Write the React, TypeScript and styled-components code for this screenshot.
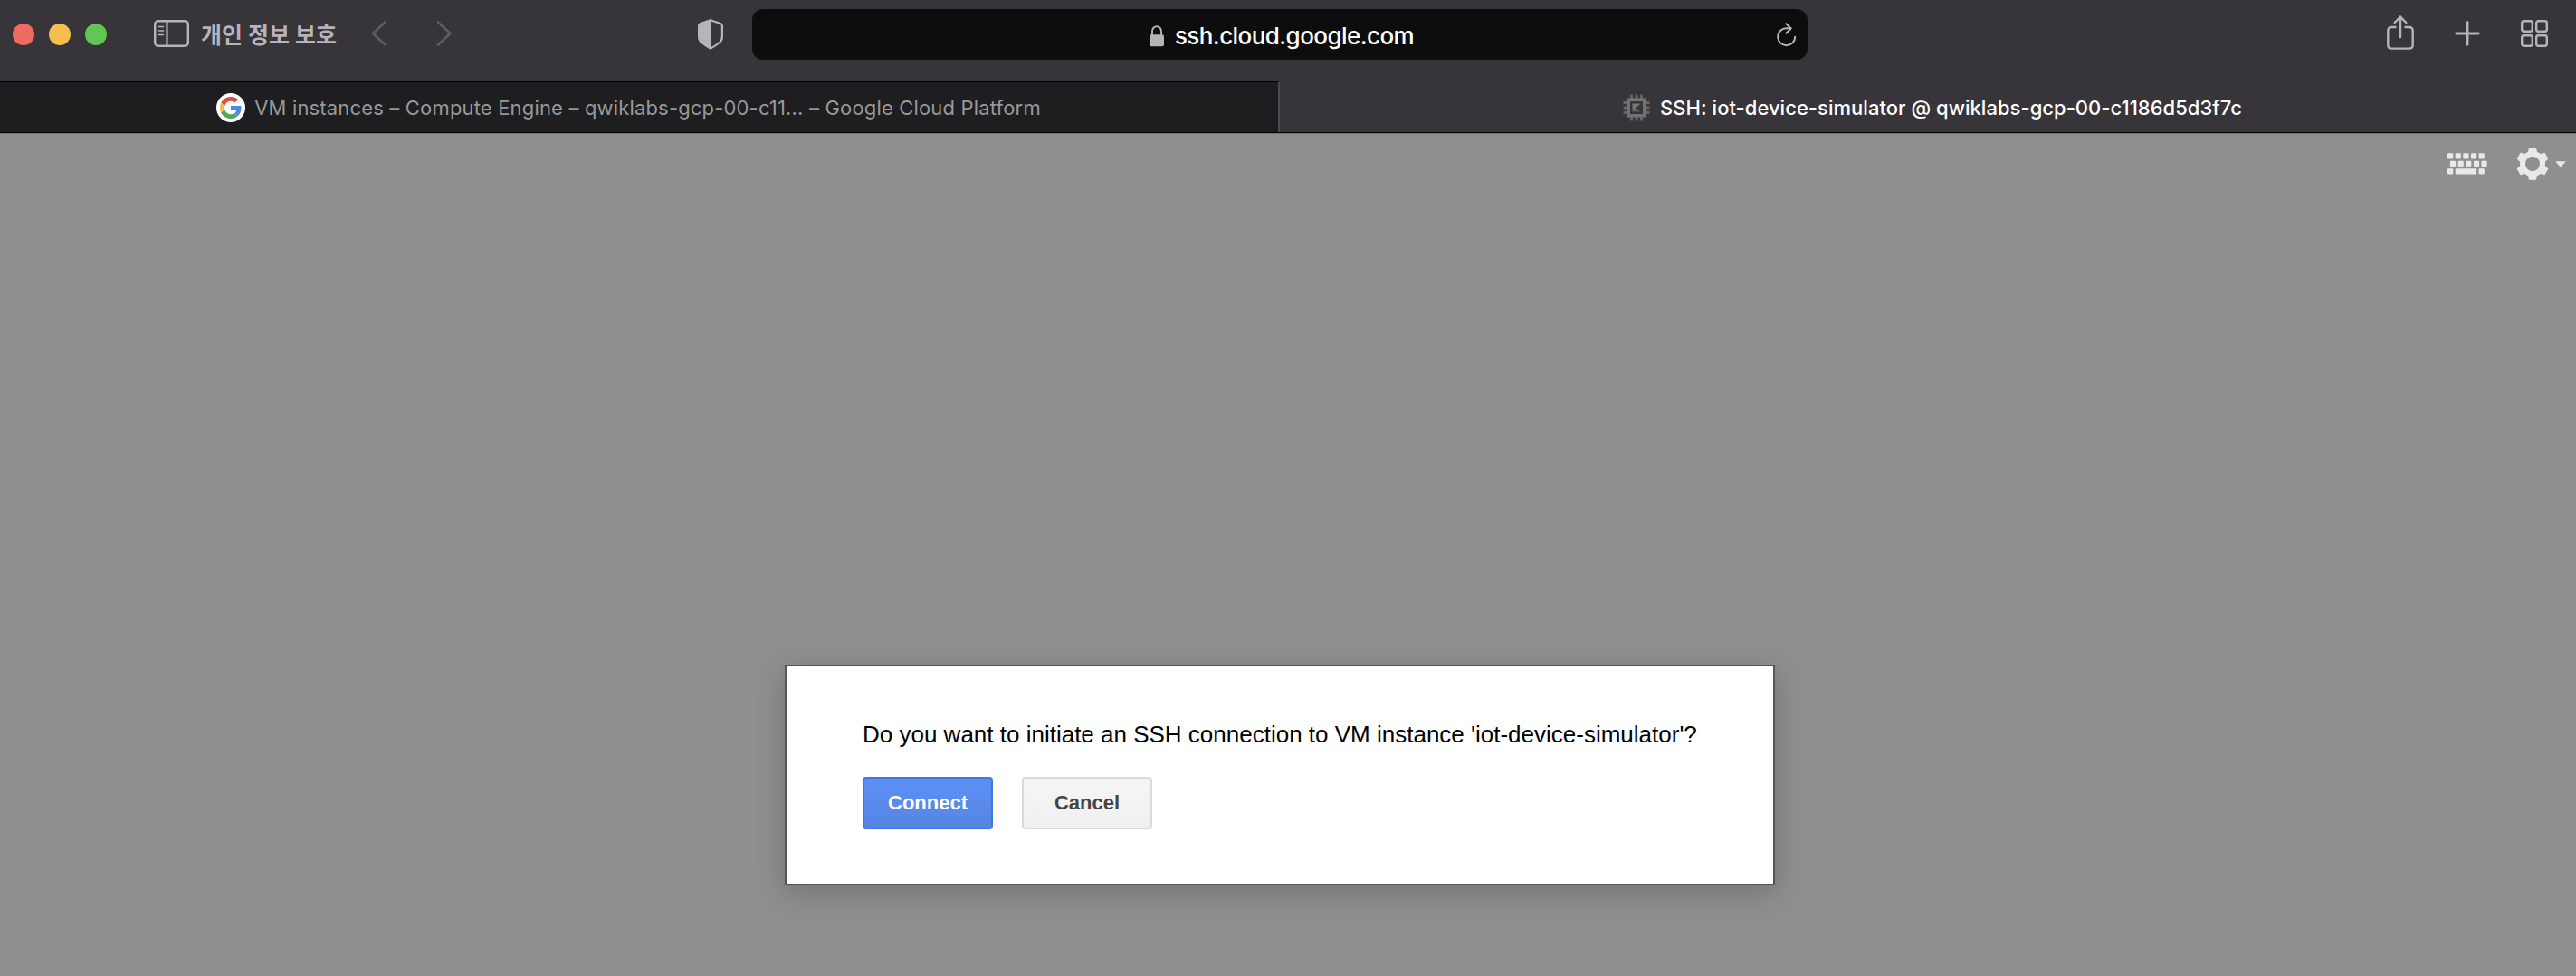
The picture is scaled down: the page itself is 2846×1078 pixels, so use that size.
import React from 'react';
import styled, { createGlobalStyle } from 'styled-components';

const GlobalStyle = createGlobalStyle`
  * { box-sizing: border-box; }
  body { margin: 0; background: #8f8f8f; }
`;

const ui = `Inter, "Noto Sans CJK KR", sans-serif`;
const arial = `"Liberation Sans", Arial, sans-serif`;
const iconColor = '#b6b4ba';

const Window = styled.div`
  display: flex;
  flex-direction: column;
  width: 100%;
  min-width: 2846px;
  height: 1078px;
  overflow: hidden;
  font-family: ${ui};
`;

const Toolbar = styled.header`
  display: grid;
  grid-template-columns: 831px 1166px 1fr;
  height: 90px;
  padding: 10px 0 24px;
  background: #37353a;
`;

const ToolbarSide = styled.div<{ $end?: boolean }>`
  display: flex;
  align-items: center;
  justify-content: ${(p) => (p.$end ? 'flex-end' : 'flex-start')};
  padding: ${(p) => (p.$end ? '0 31px 2px 0' : '0 32px 2px 14px')};
`;

const TrafficLights = styled.div`
  display: flex;
  gap: 16px;
  margin-top: 2px;
`;

const Light = styled.span<{ $color: string }>`
  width: 24px;
  height: 24px;
  border-radius: 50%;
  background: ${(p) => p.$color};
`;

const SidebarButton = styled.div`
  display: flex;
  align-items: center;
  gap: 13px;
  margin-left: 52px;
`;

const PrivateLabel = styled.span`
  font: 700 25px/36px "Noto Sans CJK KR", sans-serif;
  letter-spacing: 0.1px;
  color: ${iconColor};
  white-space: nowrap;
`;

const History = styled.nav`
  display: flex;
  gap: 54px;
  margin-left: 38px;
`;

const ShieldSlot = styled.div`
  display: flex;
  margin: 1px 0 0 auto;
`;

const Actions = styled.div`
  display: flex;
  align-items: center;
  gap: 45px;
`;

const ShareSlot = styled.span`
  display: flex;
  margin-bottom: 3px;
`;

const AddressBar = styled.div`
  display: grid;
  grid-template-columns: 30px 1fr 30px;
  align-items: center;
  height: 56px;
  padding: 0 12px;
  border-radius: 12px;
  background: #0d0d0d;
`;

const Address = styled.div`
  display: flex;
  grid-column: 2;
  align-items: center;
  justify-content: center;
  gap: 12px;
  padding: 3px 0 0 4px;
  font-size: 26px;
  font-weight: 500;
  line-height: 32px;
  letter-spacing: -0.57px;
  color: #fff;
`;

const ReloadSlot = styled.span`
  display: flex;
  justify-content: flex-end;
`;

const TabStrip = styled.div`
  display: grid;
  grid-template-columns: 1414px 1fr;
  height: 57px;
  border-bottom: 1px solid #000;
`;

const Tab = styled.div<{ $active?: boolean }>`
  display: flex;
  align-items: center;
  justify-content: center;
  gap: ${(p) => (p.$active ? 11 : 10)}px;
  padding: ${(p) => (p.$active ? '0 0 0 10px' : '0 23px 0 0')};
  border-top: 1px solid ${(p) => (p.$active ? '#37353a' : '#000')};
  border-right: ${(p) => (p.$active ? 0 : 2)}px solid #4b4a4e;
  background: ${(p) => (p.$active ? '#37353a' : '#1e1e20')};
  color: ${(p) => (p.$active ? '#fff' : '#98989a')};
  font-size: 22px;
  font-weight: ${(p) => (p.$active ? 500 : 400)};
  line-height: 28px;
  letter-spacing: ${(p) => (p.$active ? '0.03px' : '0.166px')};
  white-space: nowrap;
`;

const TabTitle = styled.span`
  padding-top: 1px;
`;

const Favicon = styled.span`
  display: flex;
  align-items: center;
  justify-content: center;
  width: 32px;
  height: 32px;
  border-radius: 50%;
  background: #fff;
`;

const Page = styled.main`
  display: flex;
  flex: 1;
  flex-direction: column;
  align-items: center;
  border-top: 1px solid #777;
  background: #8f8f8f;
`;

const TerminalTools = styled.div`
  display: flex;
  align-self: flex-end;
  align-items: center;
  height: 66px;
  padding-right: 11px;
`;

const ToolIcon = styled.span<{ $gap?: number }>`
  display: flex;
  margin-left: ${(p) => p.$gap ?? 0}px;
`;

const Dialog = styled.section`
  width: 1094px;
  height: 244px;
  margin: 520px 18px 0 0;
  padding: 60px 84px;
  border: 2px solid #575657;
  background: #fff;
  box-shadow: 0 8px 32px rgba(0, 0, 0, 0.2);
  font-family: ${arial};
`;

const Question = styled.p`
  margin: 0;
  font-size: 26px;
  line-height: 30px;
  color: #000;
  white-space: nowrap;
`;

const Buttons = styled.div`
  display: flex;
  gap: 32px;
  margin-top: 32px;
`;

const Button = styled.button<{ $primary?: boolean }>`
  width: 144px;
  height: 58px;
  padding: 0;
  border: 2px solid ${(p) => (p.$primary ? '#4274e6' : '#dadada')};
  border-radius: 4px;
  background: ${(p) =>
    p.$primary ? 'linear-gradient(#5d8ff5, #5685e3)' : 'linear-gradient(#f5f5f5, #f0f0f0)'};
  color: ${(p) => (p.$primary ? '#fff' : '#444')};
  font: 700 22px/26px ${arial};
`;

const SidebarIcon = () => (
  <svg width="39" height="30" viewBox="0 0 39 30" fill="none" stroke={iconColor}>
    <rect x="1.2" y="1.2" width="36.6" height="27.6" rx="3.6" strokeWidth="2.4" />
    <path d="M14.5 1v28" strokeWidth="2.2" />
    <path d="M5.5 7.5h5M5.5 12h5M5.5 16.5h5" strokeWidth="1.6" strokeLinecap="round" />
  </svg>
);

const Chevron = ({ forward }: { forward?: boolean }) => (
  <svg width="18" height="30" viewBox="0 0 18 30" fill="none" stroke="#5e5c61" strokeWidth="2.7" strokeLinecap="round" strokeLinejoin="round">
    <path d={forward ? 'M2 2.5L15.5 15L2 27.5' : 'M15.5 2.5L2 15L15.5 27.5'} />
  </svg>
);

const ShieldIcon = () => (
  <svg width="28" height="34" viewBox="0 0 28 34">
    <path
      d="M14 1.2L25.2 5Q26.9 5.6 26.9 7.4V19.5Q26.9 23.3 24 25.8Q19.8 29.6 14 32.6Q8.2 29.6 4 25.8Q1.1 23.3 1.1 19.5V7.4Q1.1 5.6 2.8 5Z"
      fill="none"
      stroke={iconColor}
      strokeWidth="2.2"
      strokeLinejoin="round"
    />
    <path d="M14 1.2L2.8 5Q1.1 5.6 1.1 7.4V19.5Q1.1 23.3 4 25.8Q8.2 29.6 14 32.6Z" fill={iconColor} />
  </svg>
);

const LockIcon = () => (
  <svg width="16" height="24" viewBox="0 0 16 24">
    <path d="M3 11V6.5a5 5.3 0 0 1 10 0V11" fill="none" stroke="#b4b4b4" strokeWidth="1.9" />
    <rect x="0" y="10.3" width="16" height="12.9" rx="2" fill="#b4b4b4" />
  </svg>
);

const ReloadIcon = () => (
  <svg width="22" height="27" viewBox="0 0 22 27" fill="none" stroke="#b8b8b8" strokeWidth="2" strokeLinecap="round" strokeLinejoin="round">
    <path d="M20.2 15.7a9.5 9.5 0 1 1-9.500-9.500H15" />
    <path d="M10.4 1.3L15.8 6.4L10.4 11.8" />
  </svg>
);

const ShareIcon = () => (
  <svg width="30" height="38" viewBox="0 0 30 38" fill="none" stroke={iconColor} strokeWidth="2.4" strokeLinecap="round">
    <path d="M9.5 13H5.2Q1.3 13 1.300 17V32.500Q1.300 36.600 5.200 36.600H24.800Q28.700 36.600 28.700 32.500V17Q28.700 13 24.800 13H20.500" />
    <path d="M15 24V2M8.6 8L15 1.6L21.4 8" />
  </svg>
);

const PlusIcon = () => (
  <svg width="28" height="28" viewBox="0 0 28 28" stroke={iconColor} strokeWidth="2.9" strokeLinecap="round">
    <path d="M14 1.8v24.400M1.800 14h24.400" />
  </svg>
);

const GridIcon = () => (
  <svg width="30" height="30" viewBox="0 0 30 30" fill="none" stroke={iconColor} strokeWidth="2.4">
    <rect x="1.2" y="1.2" width="11.600" height="11.600" rx="2.2" />
    <rect x="17.200" y="1.2" width="11.600" height="11.600" rx="2.2" />
    <rect x="1.2" y="17.200" width="11.600" height="11.600" rx="2.2" />
    <rect x="17.200" y="17.200" width="11.600" height="11.600" rx="2.2" />
  </svg>
);

const GoogleLogo = () => (
  <svg width="24" height="24" viewBox="0 0 48 48">
    <path fill="#db4f3f" d="M24 9.5c3.5 0 6.700 1.200 9.200 3.600l6.900-6.900C35.900 2.400 30.500 0 24 0 14.600 0 6.500 5.400 2.600 13.200l8 6.200C12.400 13.700 17.700 9.500 24 9.500z" />
    <path fill="#4f86ec" d="M47 24.500c0-1.600-.2-3.100-.4-4.500H24v9h12.900c-.6 3-2.300 5.500-4.800 7.200l7.700 6C44.400 38 47 31.800 47 24.500z" />
    <path fill="#f2bd42" d="M10.500 28.600c-.5-1.500-.8-3-.8-4.600s.3-3.100.8-4.600l-8-6.200C.9 16.500 0 20.100 0 24s.9 7.500 2.600 10.800l7.900-6.200z" />
    <path fill="#58a55c" d="M24 48c6.500 0 11.900-2.100 15.900-5.800l-7.700-6c-2.200 1.500-4.900 2.300-8.200 2.300-6.300 0-11.600-4.200-13.500-9.900l-8 6.200C6.500 42.600 14.600 48 24 48z" />
  </svg>
);

const ChipIcon = () => (
  <svg width="30" height="30" viewBox="0 0 30 30">
    <path
      d="M9.500 0.500V5M15 0.500V5M20.500 0.500V5M9.500 25V29.500M15 25V29.500M20.500 25V29.500M0.500 9.500H5M0.500 15H5M0.500 20.500H5M25 9.500H29.500M25 15H29.500M25 20.500H29.500"
      stroke="#666568"
      strokeWidth="2.8"
    />
    <rect x="6.200" y="6.200" width="17.600" height="17.600" fill="none" stroke="#737373" strokeWidth="3.600" />
    <path d="M10.500 10.500h9l-9 9z" fill="#777" />
    <path d="M14.800 15.200l4.700 4.300h-9z" fill="#5f5f61" />
  </svg>
);

const keyColumns = [0, 8.7, 17.3, 26, 34.6];
const KeyboardIcon = () => (
  <svg width="44" height="24" viewBox="0 0 44 24" fill="#e9e9e9">
    {keyColumns.map((x) => (
      <rect key={`t${x}`} x={x} y="0.2" width="6.2" height="6.2" rx="1" />
    ))}
    {keyColumns.map((x) => (
      <rect key={`m${x}`} x={x + 2.9} y="8.7" width="6.2" height="6.2" rx="1" />
    ))}
    <rect x="0" y="17.2" width="6.2" height="6.2" rx="1" />
    <rect x="8.700" y="17.2" width="23.500" height="6.2" rx="1" />
    <rect x="34.6" y="17.2" width="6.2" height="6.2" rx="1" />
  </svg>
);

const GearIcon = () => (
  <svg width="36" height="36" viewBox="0 0 36 36">
    <g fill="#e9e9e9" stroke="#e9e9e9" strokeWidth="1" strokeLinejoin="round">
      {[0, 60, 120].map((a) => (
        <path key={a} transform={`rotate(${a} 18 18)`} d="M14.400 0.700h7.200l1.300 6.400v21.800l-1.300 6.400h-7.200l-1.300-6.400v-21.800z" />
      ))}
    </g>
    <circle cx="18" cy="18" r="11" fill="none" stroke="#e9e9e9" strokeWidth="6" />
    <circle cx="18" cy="18" r="8" fill="#8f8f8f" />
  </svg>
);

const CaretIcon = () => (
  <svg width="12" height="7" viewBox="0 0 12 7">
    <path d="M0.200 0.200h11.600L6 6.800z" fill="#e9e9e9" />
  </svg>
);

export default function App() {
  return (
    <Window>
      <GlobalStyle />
      <Toolbar>
        <ToolbarSide>
          <TrafficLights>
            <Light $color="#ed6b60" />
            <Light $color="#f5bf4f" />
            <Light $color="#62c655" />
          </TrafficLights>
          <SidebarButton>
            <SidebarIcon />
            <PrivateLabel>개인 정보 보호</PrivateLabel>
          </SidebarButton>
          <History>
            <Chevron />
            <Chevron forward />
          </History>
          <ShieldSlot>
            <ShieldIcon />
          </ShieldSlot>
        </ToolbarSide>
        <AddressBar>
          <Address>
            <LockIcon />
            <span>ssh.cloud.google.com</span>
          </Address>
          <ReloadSlot>
            <ReloadIcon />
          </ReloadSlot>
        </AddressBar>
        <ToolbarSide $end>
          <Actions>
            <ShareSlot>
              <ShareIcon />
            </ShareSlot>
            <PlusIcon />
            <GridIcon />
          </Actions>
        </ToolbarSide>
      </Toolbar>
      <TabStrip>
        <Tab>
          <Favicon>
            <GoogleLogo />
          </Favicon>
          <TabTitle>VM instances – Compute Engine – qwiklabs-gcp-00-c11... – Google Cloud Platform</TabTitle>
        </Tab>
        <Tab $active>
          <ChipIcon />
          <TabTitle>SSH: iot-device-simulator @ qwiklabs-gcp-00-c1186d5d3f7c</TabTitle>
        </Tab>
      </TabStrip>
      <Page>
        <TerminalTools>
          <ToolIcon>
            <KeyboardIcon />
          </ToolIcon>
          <ToolIcon $gap={32}>
            <GearIcon />
          </ToolIcon>
          <ToolIcon $gap={7}>
            <CaretIcon />
          </ToolIcon>
        </TerminalTools>
        <Dialog>
          <Question>Do you want to initiate an SSH connection to VM instance 'iot-device-simulator'?</Question>
          <Buttons>
            <Button $primary>Connect</Button>
            <Button>Cancel</Button>
          </Buttons>
        </Dialog>
      </Page>
    </Window>
  );
}
